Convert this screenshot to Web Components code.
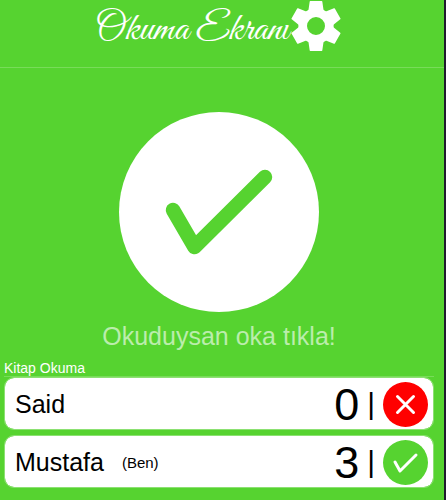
<!DOCTYPE html>
<html lang="tr">
<head>
<meta charset="utf-8">
<meta name="viewport" content="width=device-width, initial-scale=1">
<title>Okuma Ekranı</title>
<style>
  html { background: #1f1b2e; }
  body { margin: 0; font-family: "Liberation Sans", Arial, sans-serif; color: #000; }
</style>
</head>
<body>
<reading-screen>
  <screen-header slot="header">Okuma Ekranı</screen-header>
  <read-button>Okuduysan oka tıkla!</read-button>
  <reader-list label="Kitap Okuma">
    <reader-row count="0" state="no">Said</reader-row>
    <reader-row count="3" state="yes">Mustafa<span slot="note">(Ben)</span></reader-row>
  </reader-list>
</reading-screen>
<script>
const define = (name, markup, setup) => {
  const template = document.createElement('template');
  template.innerHTML = '<style>:host,*{box-sizing:border-box}</style>' + markup;
  customElements.define(name, class extends HTMLElement {
    constructor() {
      super();
      this.attachShadow({ mode: 'open' }).append(template.content.cloneNode(true));
    }
    connectedCallback() { if (setup) setup(this, this.shadowRoot); }
  });
};

define('reading-screen', `
  <style>
    :host { display: block; min-height: 100vh; margin-right: 2px; background: #56d330; }
    main { padding: 44px 10px 12px 4px; }
  </style>
  <slot name="header"></slot>
  <main><slot></slot></main>`);

define('screen-header', `
  <style>
    :host { display: block; border-bottom: 1px solid #78dc59; color: #fff; }
    header { display: flex; justify-content: center; height: 67px; padding: 1px 8px 0 0; }
    h1 { margin: 0; font: 400 40px/58px "Great Vibes", "Liberation Serif", serif; white-space: nowrap; }
    button { display: block; flex: none; width: 50px; height: 50px; margin-left: 2px; padding: 0; border: 0; background: none; color: inherit; cursor: pointer; }
    svg { display: block; width: 100%; height: 100%; }
  </style>
  <header>
    <h1><slot></slot></h1>
    <button type="button" aria-label="Ayarlar">
      <svg viewBox="-75 -75 150 150" fill="currentColor" aria-hidden="true">
        <circle r="40" fill="none" stroke="currentColor" stroke-width="26"/>
        <g>
          <path d="M-17-75H17Q19-75 19-73L23-45H-23L-19-73Q-19-75-17-75Z"/>
          <path transform="rotate(60)" d="M-17-75H17Q19-75 19-73L23-45H-23L-19-73Q-19-75-17-75Z"/>
          <path transform="rotate(120)" d="M-17-75H17Q19-75 19-73L23-45H-23L-19-73Q-19-75-17-75Z"/>
          <path transform="rotate(180)" d="M-17-75H17Q19-75 19-73L23-45H-23L-19-73Q-19-75-17-75Z"/>
          <path transform="rotate(240)" d="M-17-75H17Q19-75 19-73L23-45H-23L-19-73Q-19-75-17-75Z"/>
          <path transform="rotate(300)" d="M-17-75H17Q19-75 19-73L23-45H-23L-19-73Q-19-75-17-75Z"/>
        </g>
      </svg>
    </button>
  </header>`);

define('read-button', `
  <style>
    :host { display: block; text-align: center; }
    button { display: block; width: 200px; height: 200px; margin: 0 auto; padding: 0; border: 0; border-radius: 50%; background: #fff; cursor: pointer; }
    svg { display: block; width: 100%; height: 100%; }
    p { margin: 8px 0 0; font-size: 25px; line-height: 32px; color: #bbedac; }
  </style>
  <button type="button" aria-labelledby="hint">
    <svg viewBox="0 0 200 200" aria-hidden="true">
      <path d="M54 98L75.500 135L146 65" fill="none" stroke="#56d330" stroke-width="14.500" stroke-linecap="round" stroke-linejoin="round"/>
    </svg>
  </button>
  <p id="hint"><slot></slot></p>`);

define('reader-list', `
  <style>
    :host { display: block; margin-top: 8px; }
    h2 { margin: 0; border-bottom: 1px solid #78dc59; font-size: 14px; font-weight: 400; line-height: 16px; color: #fff; }
    section { display: grid; gap: 5px; }
  </style>
  <h2></h2>
  <section aria-label="Okuyanlar"><slot></slot></section>`,
  (host, root) => { root.querySelector('h2').textContent = host.getAttribute('label'); });

define('reader-row', `
  <style>
    :host { display: flex; align-items: center; height: 53px; padding: 1px 5px 0 10px; border: 1px solid #8ce172; border-radius: 10px; background: #fff; background-clip: padding-box; }
    .name { font-size: 25px; }
    .note { margin-left: 18px; font-size: 15px; }
    .count { margin-left: auto; font-size: 45px; line-height: 49px; }
    .bar { margin: 0 8px; font-size: 30px; }
    .status { flex: none; width: 45px; height: 45px; }
    svg { display: block; width: 100%; height: 100%; }
    path { fill: none; stroke: #fff; stroke-linecap: round; stroke-linejoin: round; }
    .yes, .no { display: none; }
    :host([state=yes]) .yes, :host([state=no]) .no { display: inline; }
  </style>
  <span class="name"><slot></slot></span>
  <span class="note"><slot name="note"></slot></span>
  <span class="count"></span>
  <span class="bar">|</span>
  <span class="status">
    <svg viewBox="0 0 45 45" aria-hidden="true">
      <g class="yes"><circle cx="22.500" cy="22.500" r="22.500" fill="#56d330"/><path stroke-width="3" d="M12 22L17 31L33 15"/></g>
      <g class="no"><circle cx="22.500" cy="22.500" r="22.500" fill="#f00"/><path stroke-width="3" d="M14.500 14.500L30.500 30.500M30.500 14.500L14.500 30.500"/></g>
    </svg>
  </span>`,
  (host, root) => { root.querySelector('.count').textContent = host.getAttribute('count'); });
</script>
</body>
</html>
